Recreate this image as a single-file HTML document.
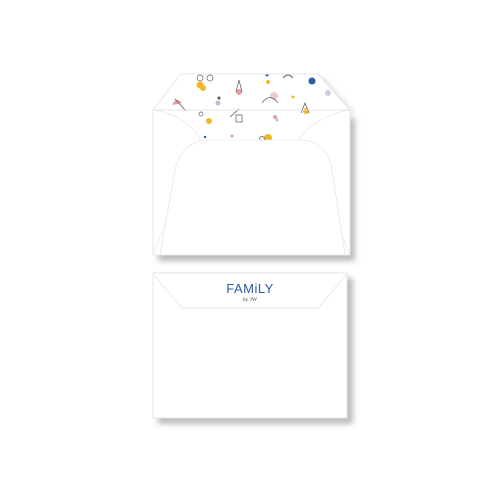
<!DOCTYPE html>
<html><head><style>
html,body{margin:0;padding:0;background:#fff;width:500px;height:500px;overflow:hidden}
</style></head><body>
<svg width="500" height="500" viewBox="0 0 500 500" xmlns="http://www.w3.org/2000/svg">
<defs>
<filter id="sh" x="-20%" y="-20%" width="150%" height="150%"><feGaussianBlur stdDeviation="3"/></filter>
<clipPath id="inner"><path d="M181,74 L318,74 L350,110 L350,140 L153,140 L153,110 Z"/></clipPath>
</defs>
<rect x="158" y="118" width="197" height="143" fill="#bbb" filter="url(#sh)"/>
<path d="M185,78 L322,78 L354,114 L158,114 Z" fill="#ccc" filter="url(#sh)"/>
<rect x="153" y="110" width="197" height="145" fill="#fff"/>
<g clip-path="url(#inner)">
<rect x="150" y="70" width="205" height="75" fill="#fff"/>
<circle cx="200" cy="85" r="3.5" fill="#f2b824"/><circle cx="203" cy="88" r="3" fill="#f2b824"/>
<circle cx="200" cy="78" r="3" fill="none" stroke="#666" stroke-width="0.7"/><circle cx="210" cy="78" r="3" fill="none" stroke="#666" stroke-width="0.7"/>
<path d="M172,105 Q176,96 182,103 Z" fill="#e79ea0"/><path d="M175,99 L186,111" stroke="#555" stroke-width="0.8"/>
<circle cx="239" cy="92" r="3" fill="#e79ea0"/><path d="M236,92 L239,80 L242,92" fill="none" stroke="#555" stroke-width="0.7"/>
<circle cx="218" cy="103" r="2.5" fill="#b8c0d6"/><circle cx="219" cy="98" r="1.5" fill="#555"/>
<circle cx="267" cy="75" r="1.5" fill="#2a5caa"/><circle cx="268" cy="82" r="2" fill="#f2b824"/>
<path d="M283,78 Q288,72 293,78" fill="none" stroke="#777" stroke-width="1.2"/>
<circle cx="312" cy="81" r="3.5" fill="#2a5caa"/>
<circle cx="274" cy="96" r="4" fill="#f1c8c8"/><path d="M262,103 Q270,92 278,103" fill="none" stroke="#666" stroke-width="0.8"/>
<circle cx="293" cy="97" r="1.5" fill="#f2b824"/>
<circle cx="306" cy="111" r="3" fill="#f2b824"/><path d="M301,113 L305,103 L309,113" fill="none" stroke="#555" stroke-width="0.7"/>
<circle cx="328" cy="93" r="3" fill="#c9cfe0"/>
<circle cx="209" cy="121" r="3" fill="#f2b824"/><circle cx="201" cy="114" r="2" fill="none" stroke="#555" stroke-width="0.7"/>
<path d="M230,117 L239,109" stroke="#555" stroke-width="0.8"/><rect x="236" y="115" width="6" height="7" fill="none" stroke="#555" stroke-width="0.7"/>
<circle cx="275" cy="117" r="2" fill="#e79ea0"/><circle cx="277" cy="120" r="1.5" fill="#b8c0d6"/>
<circle cx="268" cy="138" r="4" fill="#f2b824"/><circle cx="262" cy="139" r="2.5" fill="none" stroke="#555" stroke-width="0.7"/>
<circle cx="205" cy="137" r="1.2" fill="#2a5caa"/><circle cx="232" cy="136" r="1.5" fill="#e79ea0"/>
<circle cx="335" cy="116" r="2.5" fill="#f1c8c8"/>
</g>
<path d="M181,74 L318,74 L350,110 L153,110 Z" fill="none" stroke="#e6e6e6" stroke-width="1"/>
<path d="M153,110 Q185,115 200,138 L153,255 Z" fill="#fff" stroke="#e8e8e8" stroke-width="0.8"/>
<path d="M350,110 Q318,115 300,138 L350,255 Z" fill="#fff" stroke="#e8e8e8" stroke-width="0.8"/>
<path d="M160,255 L175,170 Q182,140 210,140 L300,140 Q327,140 332,170 L345,255 Z" fill="#fff" stroke="#e6e6e6" stroke-width="0.8"/>
<rect x="153" y="110" width="197" height="145" fill="none" stroke="#e6e6e6"/>

<rect x="158" y="278" width="195" height="146" fill="#bbb" filter="url(#sh)"/>
<rect x="153" y="273" width="194" height="145" fill="#fff" stroke="#e6e6e6"/>
<path d="M154,275 L182,308 L318,308 L346,275" fill="none" stroke="#ececec" stroke-width="1.2"/>
<text x="250" y="293" text-anchor="middle" font-family="Liberation Sans, sans-serif" font-size="13" fill="#2a5caa" letter-spacing="0.5">FAMiLY</text>
<text x="250" y="301" text-anchor="middle" font-family="Liberation Serif, serif" font-size="5.5" fill="#444">by JW</text>
</svg>
</body></html>
